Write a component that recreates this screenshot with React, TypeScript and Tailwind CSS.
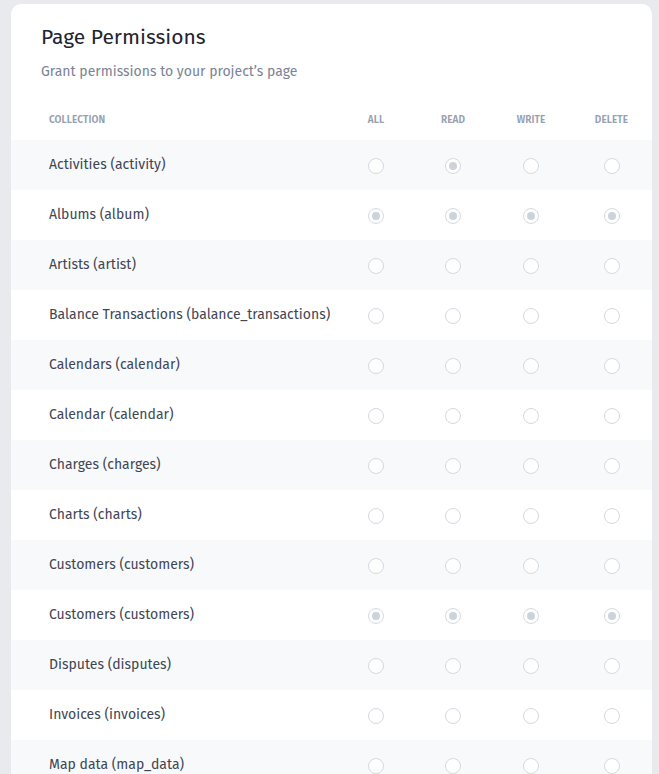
import React from "react";

type Row = {
  name: string;
  perms: [boolean, boolean, boolean, boolean];
};

const rows: Row[] = [
  { name: "Activities (activity)", perms: [false, true, false, false] },
  { name: "Albums (album)", perms: [true, true, true, true] },
  { name: "Artists (artist)", perms: [false, false, false, false] },
  { name: "Balance Transactions (balance_transactions)", perms: [false, false, false, false] },
  { name: "Calendars (calendar)", perms: [false, false, false, false] },
  { name: "Calendar (calendar)", perms: [false, false, false, false] },
  { name: "Charges (charges)", perms: [false, false, false, false] },
  { name: "Charts (charts)", perms: [false, false, false, false] },
  { name: "Customers (customers)", perms: [false, false, false, false] },
  { name: "Customers (customers)", perms: [true, true, true, true] },
  { name: "Disputes (disputes)", perms: [false, false, false, false] },
  { name: "Invoices (invoices)", perms: [false, false, false, false] },
  { name: "Map data (map_data)", perms: [false, false, false, false] },
  { name: "Orders (orders)", perms: [false, false, false, false] },
];

const colWidths = ["w-[78px]", "w-[76px]", "w-[80px]", "w-[81px]"];
const headers = ["All", "Read", "Write", "Delete"];

const Radio = ({ checked }: { checked: boolean }) => (
  <span className="flex h-4 w-4 items-center justify-center rounded-full border border-[#d5d9df] bg-white">
    {checked && <span className="h-2 w-2 rounded-full bg-[#cdd3db]" />}
  </span>
);

const App = () => {
  return (
    <div
      className="min-h-screen bg-[#e8eaee] pl-[11px] pr-[7px] pt-1"
      style={{ fontFamily: '"Fira Sans", Roboto, "Liberation Sans", sans-serif' }}
    >
      <div className="overflow-hidden rounded-t-[10px] bg-white">
        <div className="px-[30px] pt-[20px]">
          <h1 className="text-[21px] leading-[26px] text-[#1f2430]">Page Permissions</h1>
          <p className="mt-[13px] text-[14px] leading-[18px] text-[#7b8394]">
            Grant permissions to your project’s page
          </p>
        </div>

        <div className="mt-[18px] flex h-[41px] items-center pt-[2px] text-[10px] font-semibold uppercase tracking-[0.01em] text-[#97a0b0]">
          <div className="flex-1 pl-[38px]">Collection</div>
          {headers.map((h, i) => (
            <div key={h} className={`${colWidths[i]} text-center`}>
              {h}
            </div>
          ))}
        </div>

        {rows.map((row, idx) => (
          <div
            key={idx}
            className={`flex h-[50px] items-center ${idx % 2 === 0 ? "bg-[#f8f9fb]" : "bg-white"}`}
          >
            <div className="flex-1 pl-[38px] pb-[1px] text-[14px] text-[#3f4654]">{row.name}</div>
            {row.perms.map((p, i) => (
              <div key={i} className={`${colWidths[i]} mt-[2px] flex justify-center`}>
                <Radio checked={p} />
              </div>
            ))}
          </div>
        ))}
      </div>
    </div>
  );
};

export default App;
